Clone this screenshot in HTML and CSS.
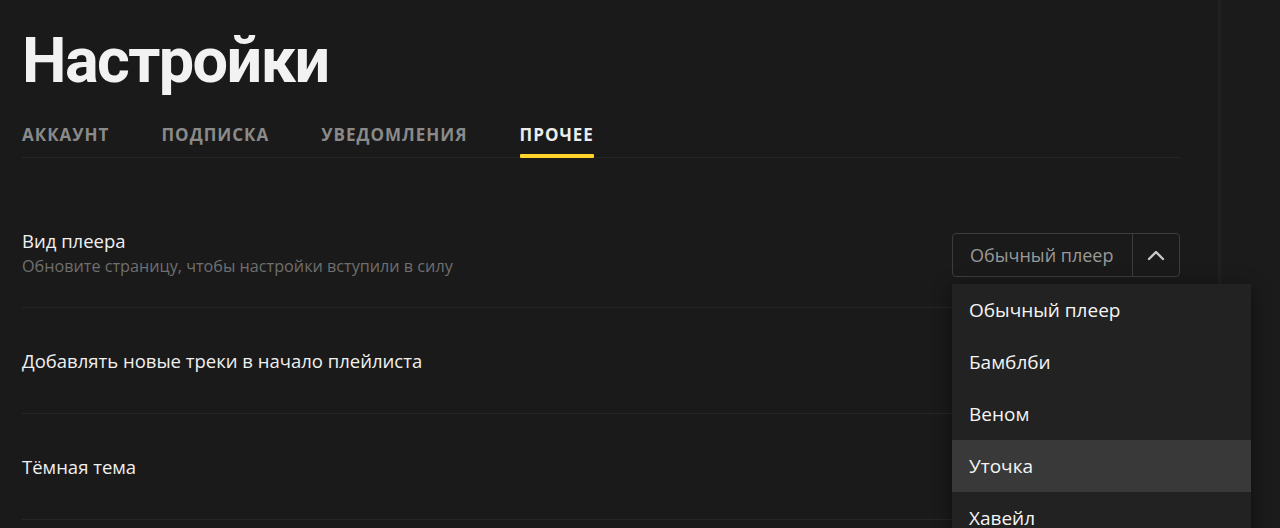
FILE: index.html
```html
<!DOCTYPE html>
<html lang="ru">
  <head>
    <meta charset="UTF-8" />
    <meta name="viewport" content="width=device-width, initial-scale=1.0" />
    <title>Настройки</title>
    <link rel="stylesheet" href="styles.css">
  </head>
  <body>
    <div class="layout">
      <main class="main">
        <h1>Настройки</h1>

        <nav class="tabs">
          <a class="tab" href="#">Аккаунт</a>
          <a class="tab" href="#">Подписка</a>
          <a class="tab" href="#">Уведомления</a>
          <a class="tab active" href="#">Прочее</a>
        </nav>

        <div class="settings">
          <div class="row">
            <div class="row-text">
              <div class="row-title">Вид плеера</div>
              <div class="row-hint">Обновите страницу, чтобы настройки вступили в силу</div>
            </div>
            <div class="select">
              <div class="select-box">
                <span class="select-value">Обычный плеер</span>
                <span class="select-arrow">
                  <svg width="18" height="12" viewBox="0 0 18 12">
                    <path d="M2 10 L9 3 L16 10" fill="none" stroke="#c8c8c8" stroke-width="2.4" stroke-linecap="round" stroke-linejoin="round" />
                  </svg>
                </span>
              </div>
              <ul class="dropdown">
                <li class="option">Обычный плеер</li>
                <li class="option">Бамблби</li>
                <li class="option">Веном</li>
                <li class="option hover">Уточка</li>
                <li class="option">Хавейл</li>
              </ul>
            </div>
          </div>

          <div class="row">
            <div class="row-title">Добавлять новые треки в начало плейлиста</div>
          </div>

          <div class="row">
            <div class="row-title">Тёмная тема</div>
          </div>

          <div class="row">
            <div class="row-title">&nbsp;</div>
          </div>
        </div>
      </main>
      <aside class="sidebar"></aside>
    </div>
  </body>
</html>
```

FILE: styles.css
```css
html,
body {
  margin: 0;
  padding: 0;
  background-color: #1a1a1a;
  color: #f2f2f2;
  font-family: "Open Sans", "Noto Sans", Arial, sans-serif;
  height: 100%;
  overflow: hidden;
}
.layout {
  display: flex;
  min-height: 100%;
}
.main {
  width: 1158px;
  padding: 23px 38px 0 22px;
  flex-shrink: 0;
}
.sidebar {
  flex: 1;
  border-left: 3px solid #202020;
  background-color: #1b1b1b;
}
h1 {
  margin: 0;
  font-family: Roboto, "Open Sans", Arial, sans-serif;
  font-size: 63px;
  line-height: 76px;
  font-weight: 700;
  letter-spacing: -1.6px;
  color: #f2f2f2;
}
.tabs {
  display: flex;
  gap: 52px;
  margin-top: 26px;
  border-bottom: 1px solid #262626;
}
.tab {
  position: relative;
  padding-bottom: 12px;
  font-size: 17px;
  line-height: 20px;
  font-weight: 700;
  letter-spacing: 1px;
  text-transform: uppercase;
  text-decoration: none;
  color: #8a8a8a;
}
.tab.active {
  color: #ececec;
}
.tab.active::after {
  content: "";
  position: absolute;
  left: 0;
  right: 0;
  bottom: -1px;
  height: 4px;
  border-radius: 1px;
  background-color: #fed42b;
}
.settings {
  margin-top: 44px;
}
.row {
  display: flex;
  align-items: center;
  justify-content: space-between;
  min-height: 105px;
  border-bottom: 1px solid #262626;
}
.row-title {
  font-size: 18.5px;
  line-height: 24px;
  color: #f0f0f0;
}
.row-text {
  margin-bottom: 4px;
}
.row-text .row-title {
  margin-bottom: 2px;
}
.row-hint {
  font-size: 16.2px;
  line-height: 22px;
  color: #6f6f6f;
}
.select {
  position: relative;
}
.select-box {
  display: flex;
  width: 226px;
  height: 42px;
  border: 1px solid #3c3c3c;
  border-radius: 4px;
}
.select-value {
  flex: 1;
  display: flex;
  align-items: center;
  padding-left: 17px;
  font-size: 18px;
  color: #999;
}
.select-arrow {
  width: 46px;
  display: flex;
  align-items: center;
  justify-content: center;
  border-left: 1px solid #3c3c3c;
}
.dropdown {
  position: absolute;
  top: 51px;
  left: 0;
  width: 299px;
  margin: 0;
  padding: 0;
  list-style: none;
  background-color: #222;
  box-shadow: 0 4px 18px rgba(0, 0, 0, 0.45);
  z-index: 2;
}
.option {
  height: 52px;
  display: flex;
  align-items: center;
  padding: 0 17px;
  font-size: 19px;
  color: #f5f5f5;
}
.option.hover {
  background-color: #393939;
}
```
